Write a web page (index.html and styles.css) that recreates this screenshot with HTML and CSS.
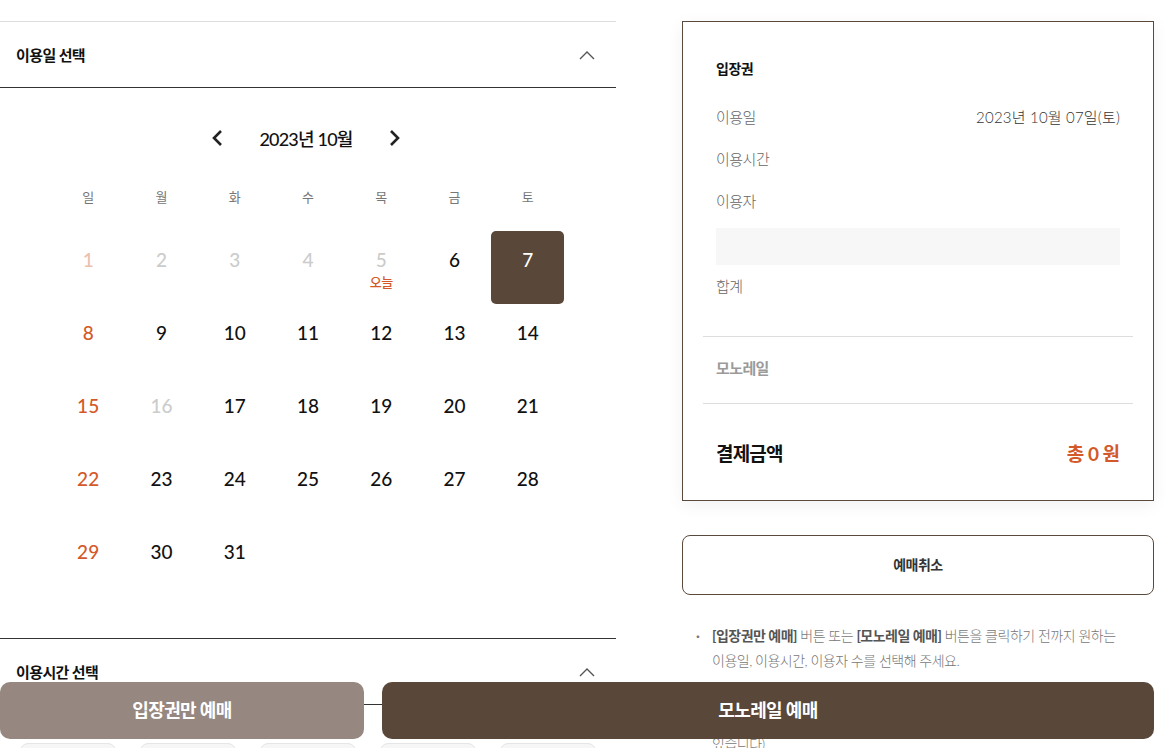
FILE: index.html
```html
<!DOCTYPE html>
<html lang="ko">
<head>
  <meta charset="UTF-8">
  <title>예매 - 이용일 선택</title>
  <link rel="stylesheet" href="styles.css">
</head>
<body>

  <div class="page">
    <!-- 왼쪽 : 이용일 / 이용시간 선택 -->
    <div class="select-col">
      <section class="panel panel-first">
        <div class="panel-head">
          <h3>이용일 선택</h3>
          <svg class="fold" width="16" height="10" viewBox="0 0 16 10"><path d="M1 9 L8 2 L15 9" fill="none" stroke="#555" stroke-width="1.4"/></svg>
        </div>
        <div class="calendar">
          <div class="cal-nav">
            <svg width="12" height="18" viewBox="0 0 12 18"><path d="M10 2 L3 9 L10 16" fill="none" stroke="#222" stroke-width="2.6"/></svg>
            <span class="cal-title">2023년 10월</span>
            <svg width="12" height="18" viewBox="0 0 12 18"><path d="M2 2 L9 9 L2 16" fill="none" stroke="#222" stroke-width="2.6"/></svg>
          </div>
          <div class="cal-week">
            <span>일</span><span>월</span><span>화</span><span>수</span><span>목</span><span>금</span><span>토</span>
          </div>
          <div class="cal-days">
            <div class="day sun past"><b>1</b></div>
            <div class="day past"><b>2</b></div>
            <div class="day past"><b>3</b></div>
            <div class="day past"><b>4</b></div>
            <div class="day past"><b>5</b><small>오늘</small></div>
            <div class="day"><b>6</b></div>
            <div class="day selected"><b>7</b></div>

            <div class="day sun"><b>8</b></div>
            <div class="day"><b>9</b></div>
            <div class="day"><b>10</b></div>
            <div class="day"><b>11</b></div>
            <div class="day"><b>12</b></div>
            <div class="day"><b>13</b></div>
            <div class="day"><b>14</b></div>

            <div class="day sun"><b>15</b></div>
            <div class="day past"><b>16</b></div>
            <div class="day"><b>17</b></div>
            <div class="day"><b>18</b></div>
            <div class="day"><b>19</b></div>
            <div class="day"><b>20</b></div>
            <div class="day"><b>21</b></div>

            <div class="day sun"><b>22</b></div>
            <div class="day"><b>23</b></div>
            <div class="day"><b>24</b></div>
            <div class="day"><b>25</b></div>
            <div class="day"><b>26</b></div>
            <div class="day"><b>27</b></div>
            <div class="day"><b>28</b></div>

            <div class="day sun"><b>29</b></div>
            <div class="day"><b>30</b></div>
            <div class="day"><b>31</b></div>
          </div>
        </div>
      </section>

      <section class="panel">
        <div class="panel-head">
          <h3>이용시간 선택</h3>
          <svg class="fold" width="16" height="10" viewBox="0 0 16 10"><path d="M1 9 L8 2 L15 9" fill="none" stroke="#555" stroke-width="1.4"/></svg>
        </div>
        <div class="time-list">
          <button class="time" title="10:00"></button>
          <button class="time" title="11:00"></button>
          <button class="time" title="12:00"></button>
          <button class="time" title="13:00"></button>
          <button class="time" title="14:00"></button>
        </div>
      </section>
    </div>

    <!-- 오른쪽 : 예매 정보 -->
    <div class="summary-col">
      <div class="summary">
        <div class="sum-block">
          <h4>입장권</h4>
          <div class="sum-row"><span>이용일</span><span class="val">2023년 10월 07일(토)</span></div>
          <div class="sum-row"><span>이용시간</span></div>
          <div class="sum-row"><span>이용자</span></div>
          <div class="sum-box"></div>
          <div class="sum-row"><span>합계</span></div>
        </div>
        <div class="sum-mono">모노레일</div>
        <div class="sum-total">
          <span>결제금액</span>
          <span class="price">총 0 원</span>
        </div>
      </div>

      <button class="btn-cancel">예매취소</button>

      <ul class="notes">
        <li><strong>[입장권만 예매]</strong> 버튼 또는 <strong>[모노레일 예매]</strong> 버튼을 클릭하기 전까지 원하는<br>이용일, 이용시간, 이용자 수를 선택해 주세요.</li>
        <li>모노레일은 이용시간별 정원이 정해져 있어 조기 마감될 수<br>있으며, 잔여석은 현장에서도 구매하실 수 있습니다.<br>있습니다)</li>
      </ul>
    </div>
  </div>

  <!-- 하단 고정 버튼 -->
  <div class="bottom-bar">
    <button class="btn-ticket">입장권만 예매</button>
    <button class="btn-mono">모노레일 예매</button>
  </div>

</body>
</html>
```

FILE: styles.css
```css
* {
  margin: 0;
  padding: 0;
  box-sizing: border-box;
}

html, body {
  height: 100%;
  overflow: hidden;
  background: #fff;
  font-family: Lato, "Noto Sans CJK KR", sans-serif;
  color: #111;
}

button {
  font-family: inherit;
  cursor: pointer;
}

.page {
  display: flex;
  padding-top: 21px;
}

/* 왼쪽 선택 영역 */
.select-col {
  width: 616px;
  flex-shrink: 0;
}

.panel {
  border-top: 1px solid #333;
}

.panel-first {
  border-top-color: #ddd;
}

.panel-head {
  height: 66px;
  display: flex;
  align-items: center;
  justify-content: space-between;
  padding: 0 21px 0 16px;
  border-bottom: 1px solid #333;
}

.panel-head h3 {
  font-size: 15px;
  font-weight: 700;
  letter-spacing: -0.6px;
  color: #111;
}

.calendar {
  width: 513px;
  margin: 0 auto;
  padding: 34px 0 42px;
}

.cal-nav {
  display: flex;
  align-items: center;
  justify-content: center;
  gap: 36px;
  height: 32px;
  margin-right: 4px;
}

.cal-title {
  font-size: 18px;
  font-weight: 500;
  letter-spacing: -0.8px;
  color: #111;
}

.cal-week {
  display: grid;
  grid-template-columns: repeat(7, 1fr);
  margin-top: 30px;
  height: 24px;
  align-items: center;
  text-align: center;
  font-size: 13px;
  color: #777;
}

.cal-days {
  display: grid;
  grid-template-columns: repeat(7, 1fr);
  grid-auto-rows: 73px;
  margin-top: 23px;
}

.day {
  display: flex;
  flex-direction: column;
  align-items: center;
  padding-top: 18px;
  border-radius: 5px;
  color: #111;
}

.day b {
  font-size: 19px;
  font-weight: 500;
  line-height: 22px;
}

.day small {
  margin-top: 3px;
  font-size: 13px;
  line-height: 16px;
  font-weight: 500;
  color: #d4592a;
  letter-spacing: -0.5px;
}

.day.sun { color: #d4592a; }
.day.past { color: #ccc; }
.day.sun.past { color: #ecc0ad; }

.day.selected {
  background: #59483a;
  color: #fff;
}

.time-list {
  display: grid;
  grid-template-columns: repeat(5, 1fr);
  gap: 24px;
  padding: 38px 20px 0;
}

.time {
  height: 50px;
  border: 1px solid #e6e6e6;
  border-radius: 8px;
  background: #f6f6f6;
}

/* 오른쪽 예매 정보 */
.summary-col {
  width: 472px;
  margin-left: 66px;
}

.summary {
  height: 480px;
  border: 1px solid #5a4a3d;
  padding: 0 20px;
  background: #fff;
  box-shadow: 0 4px 16px rgba(0,0,0,0.06);
}

.sum-block {
  padding: 37px 13px 30px;
}

.sum-block h4 {
  font-size: 14px;
  font-weight: 700;
  line-height: 20px;
  letter-spacing: -0.5px;
  margin-bottom: 16px;
}

.sum-row {
  height: 42px;
  display: flex;
  align-items: center;
  justify-content: space-between;
  font-size: 15px;
  font-weight: 300;
  color: #666;
  letter-spacing: -0.5px;
}

.sum-row .val {
  color: #333;
  letter-spacing: 0.2px;
}

.sum-box {
  height: 37px;
  margin: 7px 0 -1px;
  background: #f7f7f7;
}

.sum-mono {
  border-top: 1px solid #ddd;
  border-bottom: 1px solid #ddd;
  padding: 21px 13px 25px;
  line-height: 20px;
  font-size: 15px;
  font-weight: 700;
  color: #9a9a9a;
  letter-spacing: -0.6px;
}

.sum-total {
  height: 96px;
  display: flex;
  align-items: center;
  justify-content: space-between;
  padding: 0 13px;
  font-size: 19px;
  font-weight: 700;
  letter-spacing: -0.8px;
}

.sum-total .price {
  color: #d4592a;
  letter-spacing: 0;
  word-spacing: -1px;
}

.btn-cancel {
  display: block;
  width: 100%;
  height: 60px;
  margin-top: 34px;
  padding-bottom: 3px;
  border: 1px solid #5a4a3d;
  border-radius: 8px;
  background: #fff;
  font-size: 14px;
  font-weight: 700;
  color: #333;
  letter-spacing: -0.5px;
}

.notes {
  list-style: none;
  margin-top: 28px;
  padding-left: 30px;
  font-size: 14px;
  font-weight: 300;
  line-height: 25px;
  color: #777;
  letter-spacing: -0.5px;
}

.notes li {
  position: relative;
  margin-bottom: 8px;
}

.notes li::before {
  content: "·";
  position: absolute;
  left: -16px;
  top: 0;
  font-weight: 700;
  color: #777;
}

.notes strong {
  color: #555;
  font-weight: 700;
}

/* 하단 고정 버튼 */
.bottom-bar {
  position: fixed;
  left: 0;
  bottom: 9px;
  display: flex;
  gap: 18px;
}

.bottom-bar button {
  height: 57px;
  padding-bottom: 3px;
  border: none;
  border-radius: 10px;
  color: #fff;
  font-size: 18px;
  font-weight: 700;
  letter-spacing: -0.6px;
}

.btn-ticket {
  width: 364px;
  background: #968880;
}

.btn-mono {
  width: 772px;
  background: #59483a;
}
```
